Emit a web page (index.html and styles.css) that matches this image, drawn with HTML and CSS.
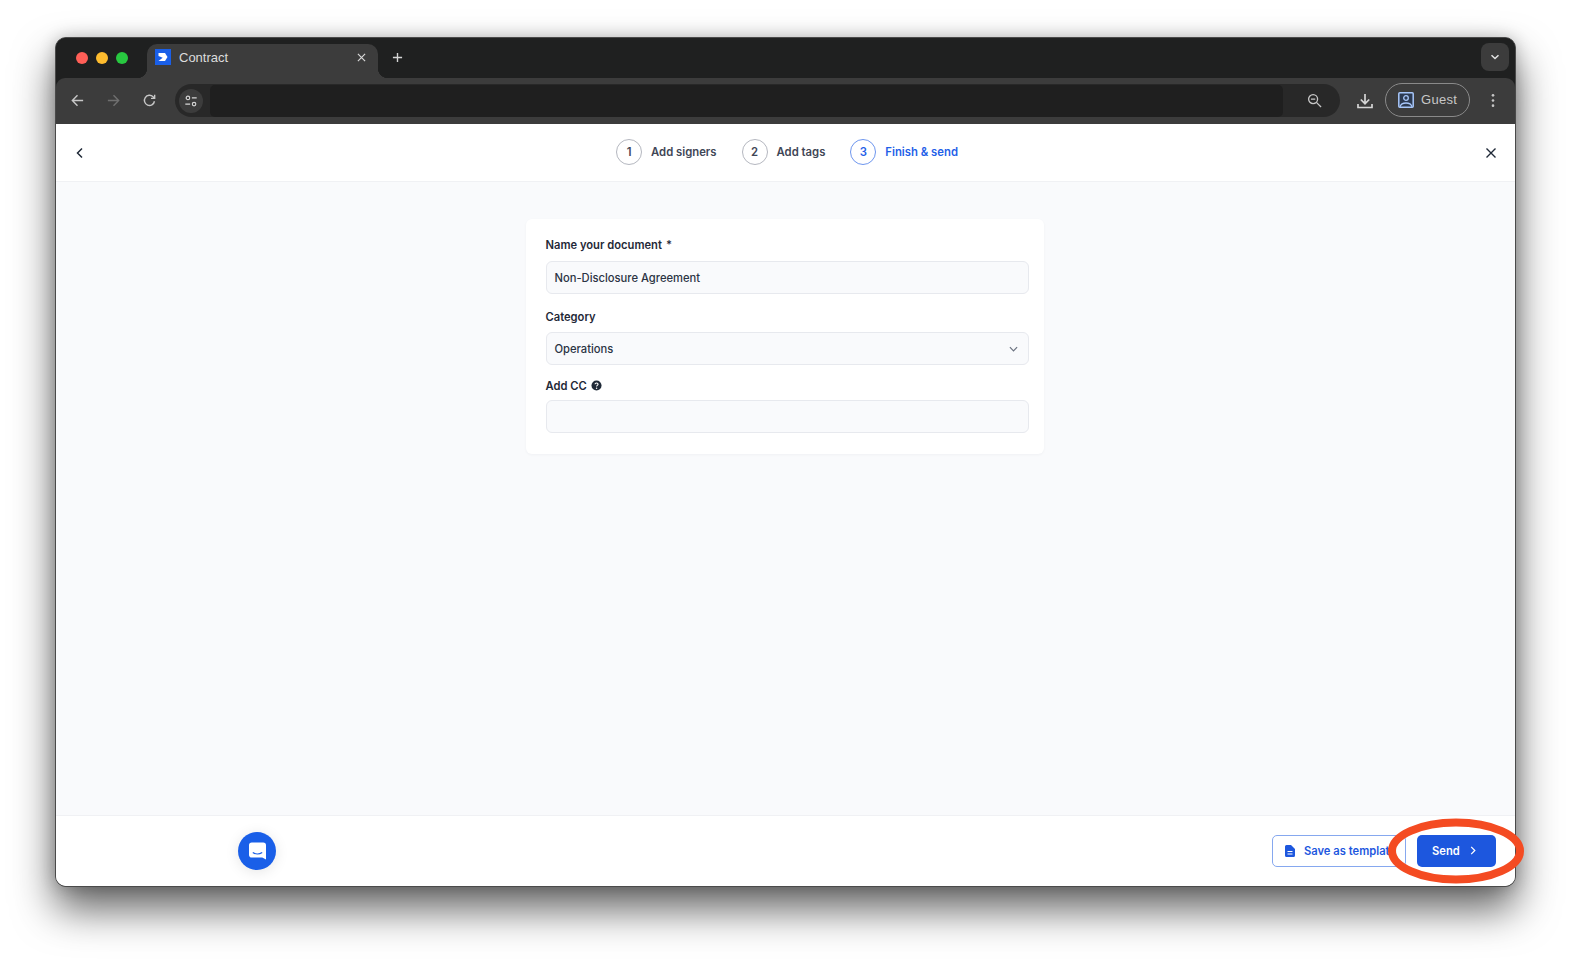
FILE: index.html
```html
<!DOCTYPE html>
<html lang="en">
<head>
<meta charset="utf-8">
<title>Contract</title>
<link rel="stylesheet" href="styles.css">
</head>
<body>
<div class="window">
  <div class="tabstrip">
    <div class="lights"><i class="light red"></i><i class="light yellow"></i><i class="light green"></i></div>
    <div class="tab">
      <svg class="favicon" viewBox="0 0 16 16"><rect width="16" height="16" fill="#1a5fe8"/><path d="M3.500 4H10l2.500 4-2.500 4H3.500l4.200-3.200L3.500 7z" fill="#fff"/></svg>
      <span class="tab-title">Contract</span>
      <svg class="tab-close" viewBox="0 0 10 10"><path d="M1 1l8 8M9 1l-8 8" stroke="#d8d8d8" stroke-width="1.300" fill="none"/></svg>
    </div>
    <svg class="newtab" viewBox="0 0 12 12"><path d="M6 1v10M1 6h10" stroke="#d5d5d5" stroke-width="1.500" fill="none"/></svg>
    <div class="tab-menu"><svg viewBox="0 0 10 6" class="tab-menu-icon"><path d="M1.500 1.200L5 4.500l3.500-3.300" stroke="#e4e4e4" stroke-width="1.500" fill="none"/></svg></div>
  </div>
  <div class="toolbar">
    <svg class="navicon" viewBox="0 0 16 16"><path d="M14 8H2.500M8 2.500L2.500 8 8 13.500" stroke="#c7c7c7" stroke-width="1.500" fill="none"/></svg>
    <svg class="navicon" viewBox="0 0 16 16"><path d="M2 8h11.500M8 2.500L13.500 8 8 13.500" stroke="#6f6f6f" stroke-width="1.500" fill="none"/></svg>
    <svg class="navicon" viewBox="0 0 16 16"><path d="M13.300 8.800A5.400 5.400 0 1 1 11.800 4L13.500 5.500M13.500 1.800v3.900H9.600" stroke="#c7c7c7" stroke-width="1.500" fill="none"/></svg>
    <div class="omnibox">
      <div class="site-info"><svg viewBox="0 0 16 16" class="site-icon"><circle cx="4.500" cy="4.500" r="2" stroke="#d5d5d5" stroke-width="1.300" fill="none"/><path d="M9 4.500h5.500M1.500 11.500H7" stroke="#d5d5d5" stroke-width="1.300"/><circle cx="11.500" cy="11.500" r="2" stroke="#d5d5d5" stroke-width="1.300" fill="none"/></svg></div>
      <div class="url"></div>
      <svg class="zoom-icon" viewBox="0 0 16 16"><circle cx="6.500" cy="6.500" r="4.800" stroke="#c7c7c7" stroke-width="1.400" fill="none"/><path d="M10 10l5 5M4.200 6.500h4.600" stroke="#c7c7c7" stroke-width="1.400"/></svg>
    </div>
    <svg class="download" viewBox="0 0 16 16"><path d="M8 1v9.500M3.800 6.500L8 10.700l4.200-4.200M1 11v3.500h14V11" stroke="#d5d5d5" stroke-width="1.700" fill="none"/></svg>
    <div class="guest">
      <svg class="guest-icon" viewBox="0 0 16 16"><rect x=".8" y=".8" width="14.400" height="14.400" rx="1" stroke="#a8c7fa" stroke-width="1.500" fill="#2c3a52"/><circle cx="8" cy="6" r="2.300" stroke="#a8c7fa" stroke-width="1.300" fill="none"/><path d="M2 14.800c.8-2.800 3.500-3.800 6-3.800s5.200 1 6 3.800" stroke="#a8c7fa" stroke-width="1.300" fill="none"/></svg>
      <span>Guest</span>
    </div>
    <svg class="kebab" viewBox="0 0 4 16"><circle cx="2" cy="2.500" r="1.400" fill="#c7c7c7"/><circle cx="2" cy="8" r="1.400" fill="#c7c7c7"/><circle cx="2" cy="13.500" r="1.400" fill="#c7c7c7"/></svg>
  </div>
  <div class="page">
    <header class="topbar">
      <svg class="top-icon" viewBox="0 0 12 12"><path d="M8 1.500L3.500 6 8 10.500" stroke="#1f2937" stroke-width="1.500" fill="none"/></svg>
      <nav class="steps">
        <div class="step"><span class="step-num">1</span><span>Add signers</span></div>
        <div class="step"><span class="step-num">2</span><span>Add tags</span></div>
        <div class="step active"><span class="step-num">3</span><span>Finish &amp; send</span></div>
      </nav>
      <svg class="top-icon close" viewBox="0 0 12 12"><path d="M1.500 1.500l9 9M10.500 1.500l-9 9" stroke="#1f2937" stroke-width="1.400" fill="none"/></svg>
    </header>
    <main class="content">
      <form class="card">
        <label class="field-label">Name your document <span class="req">*</span></label>
        <div class="input">Non-Disclosure Agreement</div>
        <label class="field-label second">Category</label>
        <div class="input select">Operations
          <svg class="chev" viewBox="0 0 10 6"><path d="M1 1l4 4 4-4" stroke="#6b7280" stroke-width="1.300" fill="none"/></svg>
        </div>
        <label class="field-label third">Add CC
          <svg class="help" viewBox="0 0 12 12"><circle cx="6" cy="6" r="5.500" fill="#1f2937"/><path d="M4.400 4.700c0-1 .8-1.500 1.600-1.500s1.700.5 1.700 1.400c0 1.200-1.600 1.200-1.600 2.400" stroke="#fff" stroke-width="1.200" fill="none"/><circle cx="6.100" cy="8.900" r=".8" fill="#fff"/></svg>
        </label>
        <div class="input cc"></div>
      </form>
    </main>
    <footer class="footer">
      <div class="chat"><svg class="chat-icon" viewBox="0 0 18 18"><path d="M3 0h12a3 3 0 0 1 3 3v15l-4-2H3a3 3 0 0 1-3-3V3a3 3 0 0 1 3-3z" fill="#fff"/><path d="M4 10.500c3 2 7 2 10 0" stroke="#1a5fe8" stroke-width="1.200" fill="none"/></svg></div>
      <div class="actions">
        <button class="btn outline" type="button">
          <svg class="doc" viewBox="0 0 10 12"><path d="M1.500 0H6l4 4v6.500A1.500 1.500 0 0 1 8.500 12h-7A1.500 1.500 0 0 1 0 10.500v-9A1.500 1.500 0 0 1 1.500 0z" fill="#1d57de"/><path d="M2.500 6.500h5M2.500 9h5" stroke="#fff" stroke-width="1"/></svg>
          Save as template
        </button>
        <button class="btn primary" type="button">Send
          <svg class="send-chev" viewBox="0 0 6 10"><path d="M1 1l4 4-4 4" stroke="#fff" stroke-width="1.400" fill="none"/></svg>
        </button>
      </div>
    </footer>
  </div>
  <svg class="annotation" viewBox="0 0 140 68"><ellipse cx="70" cy="34" rx="64" ry="28.500" fill="none" stroke="#f44b22" stroke-width="8"/></svg>
</div>
</body>
</html>
```

FILE: styles.css
```css
* { box-sizing: border-box; }
html, body { margin: 0; height: 100%; }
body {
  background: #fff;
  padding: 37px 0 0 55px;
  font-family: Inter, "Liberation Sans", sans-serif;
  overflow: hidden;
}
.window {
  position: relative;
  width: 1461px;
  height: 850px;
  border-radius: 11px;
  border: 1px solid #4a4a4a;
  box-shadow: 0 22px 42px rgba(0, 0, 0, .62), 0 0 16px rgba(0, 0, 0, .2);
  display: flex;
  flex-direction: column;
  background: #1f2020;
}
.tabstrip {
  height: 40px;
  flex: none;
  display: flex;
  align-items: flex-end;
  background: #1f2020;
  border-radius: 10px 10px 0 0;
  padding-left: 20px;
  position: relative;
}
.lights { display: flex; gap: 8px; align-self: center; }
.light { width: 12px; height: 12px; border-radius: 50%; display: block; }
.red { background: #ff5f57; }
.yellow { background: #febc2e; }
.green { background: #28c840; }
.tab {
  width: 231px;
  height: 34px;
  margin-left: 19px;
  background: #3c3c3c;
  border-radius: 10px 10px 0 0;
  display: flex;
  align-items: center;
  padding: 0 12px 8px 8px;
  position: relative;
  color: #dcdcdc;
  font: 13px "Liberation Sans", sans-serif;
}
.tab::before, .tab::after {
  content: "";
  position: absolute;
  bottom: 0;
  width: 10px;
  height: 10px;
}
.tab::before { left: -10px; background: radial-gradient(circle at 0 0, transparent 10px, #3c3c3c 10.500px); }
.tab::after { right: -10px; background: radial-gradient(circle at 100% 0, transparent 10px, #3c3c3c 10.500px); }
.favicon { width: 16px; height: 16px; flex: none; }
.tab-title { margin-left: 8px; flex: 1; }
.tab-close { width: 9px; height: 9px; }
.newtab { width: 11px; height: 11px; margin: 0 0 15px 14px; }
.tab-menu {
  position: absolute;
  right: 6px;
  top: 5px;
  width: 28px;
  height: 28px;
  border-radius: 8px;
  background: #3c3c3c;
  display: flex;
  align-items: center;
  justify-content: center;
}
.tab-menu-icon { width: 10px; height: 6px; }
.toolbar {
  height: 46px;
  flex: none;
  background: #3c3c3c;
  border-radius: 9px 9px 0 0;
  display: flex;
  align-items: center;
  padding: 0 0 1px 14px;
}
.navicon { width: 15px; height: 15px; flex: none; margin-right: 21px; }
.navicon:nth-child(3) { margin-right: 18px; }
.omnibox {
  width: 1165px;
  height: 33px;
  background: #282828;
  border-radius: 17px;
  display: flex;
  align-items: center;
  padding-left: 4px;
  position: relative;
}
.site-info {
  width: 24px;
  height: 24px;
  border-radius: 50%;
  background: #3c3c3c;
  display: flex;
  align-items: center;
  justify-content: center;
  flex: none;
}
.site-icon { width: 14px; height: 14px; }
.url { width: 1073px; height: 32px; background: #1f1f1f; border-radius: 5px; margin-left: 7px; flex: none; align-self: flex-end; }
.zoom-icon { width: 15px; height: 15px; margin-left: 24px; flex: none; }
.download { width: 16px; height: 16px; margin-left: 17px; flex: none; }
.guest {
  width: 85px;
  height: 34px;
  margin: 0 0 2px 12px;
  border: 1px solid #8a8a8a;
  border-radius: 17px;
  display: flex;
  align-items: center;
  padding-left: 12px;
  gap: 7px;
  color: #c7c7c7;
  font: 13px "Liberation Sans", sans-serif;
  letter-spacing: .3px;
  flex: none;
}
.guest-icon { width: 16px; height: 16px; flex: none; }
.kebab { width: 4px; height: 15px; margin-left: 21px; flex: none; }
.page {
  flex: 1;
  min-height: 0;
  display: flex;
  flex-direction: column;
  background: #fff;
  border-radius: 0 0 10px 10px;
  overflow: hidden;
}
.topbar {
  height: 58px;
  flex: none;
  background: #fff;
  border-bottom: 1px solid #f0f1f4;
  display: flex;
  align-items: center;
  padding: 0 18px;
  justify-content: space-between;
}
.top-icon { width: 12px; height: 12px; flex: none; }
.steps { display: flex; gap: 25px; margin: -1px 0 0 3px; }
.step { display: flex; align-items: center; gap: 9px; font-size: 11.300px; font-weight: 600; color: #3f4656; }
.step-num {
  width: 26px;
  height: 26px;
  border-radius: 50%;
  border: 1px solid #b4b7bf;
  display: flex;
  align-items: center;
  justify-content: center;
}
.step.active { color: #1f5fe8; }
.step.active .step-num { border-color: #6e96ee; }
.content {
  flex: 1;
  background: #f9fafc;
  padding-top: 37px;
  display: flex;
  justify-content: center;
}
.card {
  width: 518px;
  height: 235px;
  margin-left: -2px;
  background: #fff;
  border-radius: 6px;
  padding: 19px 15px 0 20px;
  box-shadow: 0 1px 3px rgba(17, 24, 39, .04);
}
.field-label {
  display: flex;
  align-items: center;
  gap: 4px;
  height: 13px;
  font-size: 11.200px;
  font-weight: 600;
  color: #1f2937;
}
.req { font-weight: 600; }
.second { margin-top: 16px; }
.third { margin-top: 14px; }
.help { width: 11px; height: 11px; }
.input {
  height: 33px;
  margin-top: 10px;
  background: #f9fafc;
  border: 1px solid #e7e9ee;
  border-radius: 6px;
  display: flex;
  align-items: center;
  padding: 0 10px 0 8px;
  font-size: 11.200px;
  font-weight: 500;
  color: #2b3444;
}
.second + .select { margin-top: 9px; }
.select { justify-content: space-between; }
.chev { width: 9px; height: 6px; }
.input.cc { height: 33px; margin-top: 8px; }
.footer {
  height: 71px;
  flex: none;
  background: #fff;
  border-top: 1px solid #f0f1f4;
  display: flex;
  align-items: center;
  justify-content: space-between;
  padding: 0 19px 1px 182px;
}
.chat {
  width: 38px;
  height: 38px;
  border-radius: 50%;
  background: #1a5fe8;
  display: flex;
  align-items: center;
  justify-content: center;
  box-shadow: 0 2px 14px rgba(0, 0, 0, .1);
}
.chat-icon { width: 17px; height: 18px; }
.actions { display: flex; align-items: center; gap: 11px; }
.btn {
  height: 32px;
  border-radius: 5px;
  display: flex;
  align-items: center;
  font: 600 11.200px Inter, "Liberation Sans", sans-serif;
}
.outline {
  width: 134px;
  background: #fff;
  border: 1px solid #86a8ef;
  color: #1d57de;
  padding: 0 0 0 12px;
  gap: 9px;
}
.doc { width: 10px; height: 12px; flex: none; }
.primary {
  width: 79px;
  background: #1d57de;
  border: 0;
  color: #fff;
  padding: 0 0 0 15px;
  gap: 10px;
}
.send-chev { width: 6px; height: 9px; }
.annotation {
  position: absolute;
  left: 1330px;
  top: 779px;
  width: 140px;
  height: 68px;
  overflow: visible;
}
```
